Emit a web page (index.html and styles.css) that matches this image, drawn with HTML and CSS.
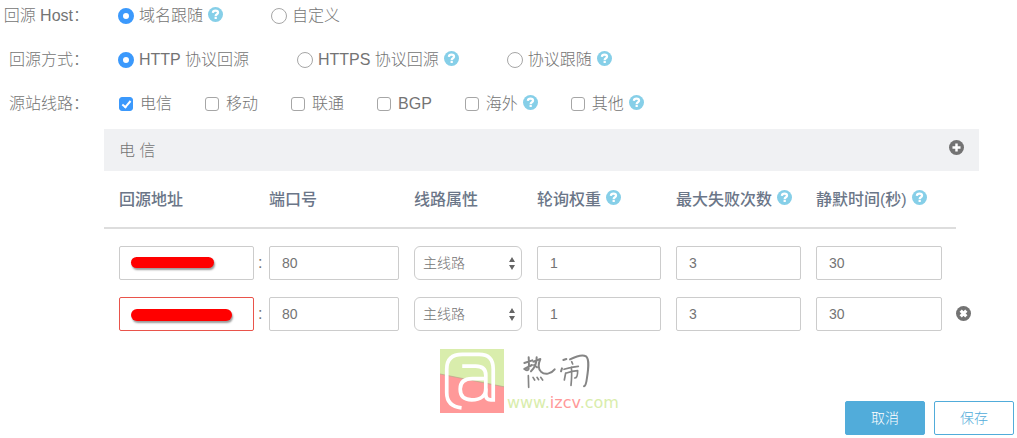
FILE: index.html
```html
<!DOCTYPE html>
<html lang="zh-CN">
<head>
  <meta charset="UTF-8" />
  <meta name="viewport" content="width=device-width, initial-scale=1" />
  <title>回源配置</title>
  <link rel="stylesheet" href="styles.css">
</head>
<body>
  <svg class="sprite" aria-hidden="true">
    <symbol id="icon-help" viewBox="0 0 16 16">
      <circle cx="8" cy="8" r="8" fill="currentColor" />
      <path d="M5.200 6.300C5.300 4.600 6.500 3.900 8 3.900c1.600 0 2.700.8 2.700 2.200C10.700 7.800 8.200 7.600 8.200 9.500" fill="none" stroke="#fff" stroke-width="2.400" />
      <rect x="7" y="10.400" width="2.400" height="2.400" fill="#fff" />
    </symbol>
    <symbol id="icon-plus" viewBox="0 0 16 16">
      <circle cx="8" cy="8" r="8" fill="currentColor" />
      <path d="M8 3.700v8.600M3.700 8h8.600" stroke="#fff" stroke-width="2.600" />
    </symbol>
    <symbol id="icon-remove" viewBox="0 0 16 16">
      <circle cx="8" cy="8" r="8" fill="currentColor" />
      <path d="M5 5l6 6M11 5l-6 6" stroke="#fff" stroke-width="3.400" />
    </symbol>
  </svg>

  <form class="origin-form">
    <div class="form-row" role="radiogroup" aria-labelledby="host-label">
      <span class="row-label" id="host-label">回源 Host：</span>
      <div class="options">
        <label class="option"><input type="radio" name="host" checked />域名跟随<svg class="icon help"><use href="#icon-help" /></svg></label>
        <label class="option"><input type="radio" name="host" />自定义</label>
      </div>
    </div>
    <div class="form-row" role="radiogroup" aria-labelledby="protocol-label">
      <span class="row-label" id="protocol-label">回源方式：</span>
      <div class="options">
        <label class="option"><input type="radio" name="protocol" checked />HTTP 协议回源</label>
        <label class="option"><input type="radio" name="protocol" />HTTPS 协议回源<svg class="icon help"><use href="#icon-help" /></svg></label>
        <label class="option"><input type="radio" name="protocol" />协议跟随<svg class="icon help"><use href="#icon-help" /></svg></label>
      </div>
    </div>
    <div class="form-row" role="group" aria-labelledby="line-label">
      <span class="row-label" id="line-label">源站线路：</span>
      <div class="options lines">
        <label class="option"><input type="checkbox" checked />电信</label>
        <label class="option"><input type="checkbox" />移动</label>
        <label class="option"><input type="checkbox" />联通</label>
        <label class="option"><input type="checkbox" />BGP</label>
        <label class="option"><input type="checkbox" />海外<svg class="icon help"><use href="#icon-help" /></svg></label>
        <label class="option"><input type="checkbox" />其他<svg class="icon help"><use href="#icon-help" /></svg></label>
      </div>
    </div>

    <section class="panel">
      <div class="panel-header">
        <span>电 信</span>
        <button type="button" class="icon-btn add" aria-label="添加"><svg class="icon"><use href="#icon-plus" /></svg></button>
      </div>
      <table class="origin-table">
        <colgroup>
          <col class="col-address" />
          <col class="col-port" />
          <col class="col-type" />
          <col class="col-weight" />
          <col class="col-fails" />
          <col class="col-silence" />
          <col class="col-action" />
        </colgroup>
        <thead>
          <tr>
            <th>回源地址</th>
            <th>端口号</th>
            <th>线路属性</th>
            <th><span class="th-text">轮询权重<svg class="icon help"><use href="#icon-help" /></svg></span></th>
            <th><span class="th-text">最大失败次数<svg class="icon help"><use href="#icon-help" /></svg></span></th>
            <th><span class="th-text">静默时间(秒)<svg class="icon help"><use href="#icon-help" /></svg></span></th>
            <td></td>
          </tr>
        </thead>
        <tbody>
          <tr>
            <td><div class="address"><input type="text" aria-label="回源地址" /><span class="mask"></span></div></td>
            <td class="port"><div class="port-field"><span class="colon">:</span><input type="text" aria-label="端口号" value="80" /></div></td>
            <td><select aria-label="线路属性"><option>主线路</option><option>备线路</option></select></td>
            <td><input type="text" aria-label="轮询权重" value="1" /></td>
            <td><input type="text" aria-label="最大失败次数" value="3" /></td>
            <td class="silence"><input type="text" aria-label="静默时间" value="30" /></td>
            <td class="action"></td>
          </tr>
          <tr>
            <td><div class="address"><input type="text" class="error" aria-label="回源地址" /><span class="mask mask-long"></span></div></td>
            <td class="port"><div class="port-field"><span class="colon">:</span><input type="text" aria-label="端口号" value="80" /></div></td>
            <td><select aria-label="线路属性"><option>主线路</option><option>备线路</option></select></td>
            <td><input type="text" aria-label="轮询权重" value="1" /></td>
            <td><input type="text" aria-label="最大失败次数" value="3" /></td>
            <td class="silence"><input type="text" aria-label="静默时间" value="30" /></td>
            <td class="action"><button type="button" class="icon-btn" aria-label="删除"><svg class="icon"><use href="#icon-remove" /></svg></button></td>
          </tr>
        </tbody>
      </table>
    </section>

    <div class="footer">
      <div class="brand">
        <svg class="brand-mark" viewBox="12 12 190 190" aria-hidden="true">
          <rect x="12" y="12" width="190" height="190" fill="#ff9999" />
          <path d="M12 12h190v112L12 86z" fill="#d9edac" />
          <path d="M12 86l190 38" stroke="#b9a68b" stroke-width="3" opacity="0.7" />
          <g fill="none" stroke="#fff" stroke-width="11">
            <path d="M76 187C48 184 32 170 32 142V72C32 42 48 28 78 28h50c30 0 42 15 42 44v91h-7c-11 0-15-6-15-16V90c0-18-10-27-30-27H78" />
            <path d="M148 100h-40c-25 0-36 11-36 31s11 32 34 32c27 0 42-12 42-34" />
          </g>
        </svg>
        <div class="brand-name">
          <svg class="brand-script" viewBox="15 21 210 114" role="img" aria-label="热闹">
            <g fill="none" stroke="#858585" stroke-width="6" stroke-linecap="round" stroke-linejoin="round">
              <path d="M28 54l24-8M41 37c1 14 2 28-1 37-3 3-6 2-9 0M28 72l23-12" />
              <path d="M55 50l21-8c-7 16-6 30 2 38 12 11 30 7 41-7M65 37c0 16-3 29-17 42M57 60l9 7" />
              <path d="M40 92l1 35M54 97l5 8M66 97l5 7M77 97l6 8" stroke-width="5" />
              <path d="M145 45l9-3M141 70l-3 9" />
              <path d="M165 43c16-8 37-16 48-9 11 9 7 38 3 64-2 17-5 25-9 26" />
              <path d="M170 50l3 7M147 73c15-5 29-8 43-9M152 84l-4 21M152 85c13-5 25-8 36-8 0 11-2 22-9 22M169 66c2 18 1 36-1 55" stroke-width="5" />
            </g>
          </svg>
          <span class="brand-url">www.<b>izcv</b>.com</span>
        </div>
      </div>
      <div class="actions">
        <button type="button" class="btn btn-primary">取消</button>
        <button type="submit" class="btn">保存</button>
      </div>
    </div>
  </form>
</body>
</html>
```

FILE: styles.css
```css
*, *::before, *::after {
  box-sizing: border-box;
}
body {
  margin: 0;
  background: #fff;
  color: #747474;
  font-family: "Liberation Sans", "Noto Sans CJK SC", sans-serif;
  font-size: 16px;
  font-weight: 300;
}
input, select, button {
  font-family: inherit;
  font-weight: inherit;
  color: inherit;
}
.sprite {
  display: none;
}
.icon {
  display: block;
  flex: none;
  width: 15px;
  height: 15px;
}
.help {
  color: #86cfe8;
  margin-left: 5px;
  margin-bottom: 3px;
}
.form-row {
  display: flex;
  gap: 29px;
  min-height: 32px;
  line-height: 32px;
  margin-bottom: 12px;
}
.row-label {
  flex: none;
  width: 89px;
  display: flex;
  justify-content: flex-end;
  white-space: nowrap;
}
.options {
  display: flex;
  flex-wrap: wrap;
  column-gap: 48px;
}
.lines {
  column-gap: 33px;
}
.option {
  display: flex;
  align-items: center;
}
input[type="radio"], input[type="checkbox"] {
  appearance: none;
  flex: none;
  margin: 0 5px 0 0;
  width: 16px;
  height: 16px;
  border: 1px solid #a6a6a6;
  border-radius: 50%;
  background: #fff;
}
input[type="radio"]:checked {
  border: 5px solid #3b99fc;
}
input[type="checkbox"] {
  width: 14px;
  height: 14px;
  margin: 0 7px 0 1px;
  border-radius: 3px;
}
.option + .option input[type="checkbox"] {
  margin-left: 0;
}
input[type="checkbox"]:checked {
  border-color: #3b99fc;
  background: #3b99fc;
  display: grid;
  place-items: center;
}
input[type="checkbox"]:checked::before {
  content: "";
  width: 5px;
  height: 9px;
  margin-bottom: 2px;
  border: solid #fff;
  border-width: 0 2px 2px 0;
  transform: rotate(40deg);
}
.panel {
  margin: -3px 38px 0 104px;
}
.panel-header {
  display: flex;
  align-items: center;
  justify-content: space-between;
  height: 42px;
  padding: 0 15px 2px;
  background: #f0f1f3;
}
.icon-btn {
  display: block;
  padding: 0;
  border: 0;
  background: none;
  color: #737373;
  cursor: pointer;
}
.add {
  margin-bottom: 4px;
}
.origin-table {
  width: 100%;
  table-layout: fixed;
  border-collapse: separate;
  border-spacing: 0;
}
.col-address { width: 150px; }
.col-port { width: 145px; }
.col-type { width: 123px; }
.col-weight { width: 139px; }
.col-fails { width: 140px; }
.col-silence { width: 155px; }
.col-action { width: 23px; }
.origin-table th {
  height: 58px;
  padding: 0 0 2px 15px;
  border-bottom: 2px solid #ddd;
  color: #6b7688;
  font-weight: 500;
  text-align: left;
  white-space: nowrap;
}
.th-text {
  display: flex;
  align-items: center;
}
.th-text .help {
  margin-bottom: 2px;
}
.origin-table tbody td {
  padding: 17px 0 0 15px;
}
.origin-table tbody .port,
.origin-table tbody .action {
  padding-left: 0;
}
.origin-table tbody .silence {
  padding-right: 14px;
}
.action .icon-btn {
  margin-bottom: 2px;
}
.port-field {
  display: flex;
  align-items: center;
}
.colon {
  flex: none;
  width: 15px;
  padding-left: 4px;
}
.origin-table input,
.origin-table select {
  display: block;
  width: 100%;
  min-width: 0;
  height: 34px;
  padding: 0 12px;
  border: 1px solid #ccc;
  border-radius: 2px;
  background: #fff;
  font-size: 14px;
}
.origin-table select {
  appearance: none;
  padding: 0 8px;
  border-radius: 6px;
  background: url("data:image/svg+xml,%3Csvg xmlns='http://www.w3.org/2000/svg' width='6' height='13'%3E%3Cpath d='M0 5l3-5 3 5zM0 8h6l-3 5z' fill='%23666'/%3E%3C/svg%3E") no-repeat right 6px center;
}
.origin-table input.error {
  border-color: #e9544b;
}
.address {
  position: relative;
}
.mask {
  position: absolute;
  top: 11px;
  left: 12px;
  width: 83px;
  height: 11px;
  border-radius: 6px;
  background: #f00;
  box-shadow: 1px 2px 2px rgba(0, 0, 0, 0.4);
}
.mask-long {
  top: 12px;
  width: 101px;
  height: 12px;
}
.footer {
  display: grid;
  grid-template-columns: 9fr auto 8fr;
  padding: 18px 3px 0 0;
}
.brand {
  grid-column: 2;
  display: flex;
  gap: 3px;
}
.brand-mark {
  width: 64px;
  height: 64px;
}
.brand-name {
  width: 116px;
}
.brand-script {
  display: block;
  width: 70px;
  height: 38px;
  margin: 3px 0 3px 13px;
}
.brand-url {
  display: block;
  font-family: "DejaVu Sans", sans-serif;
  font-size: 16px;
  font-weight: 400;
  line-height: 20px;
  color: #d9edac;
}
.brand-url b {
  font-weight: inherit;
  color: #ff9999;
}
.actions {
  display: flex;
  justify-content: flex-end;
  gap: 9px;
  padding-top: 52px;
}
.btn {
  width: 80px;
  height: 34px;
  padding: 0 0 2px;
  border: 1px solid #51acda;
  border-radius: 2px;
  background: #fff;
  color: #51acda;
  font-size: 14px;
  cursor: pointer;
}
.btn-primary {
  background: #51acda;
  color: #fff;
}
```
